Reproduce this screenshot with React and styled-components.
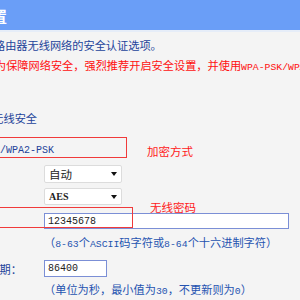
import React from 'react'
import styled, { createGlobalStyle } from 'styled-components'

const GlobalStyle = createGlobalStyle`
  body {
    margin: 0;
    background: #f4f4f4;
    font-family: "Noto Sans CJK SC", sans-serif;
  }
`

const Page = styled.div`
  width: 300px;
  height: 300px;
  overflow: hidden;
  position: relative;
  background: #f4f4f4;
`

const TitleBar = styled.div`
  height: 30px;
  background: #6a9ef7;
  border-bottom: 2px solid #e6edf8;
  display: flex;
  align-items: center;
`

const Title = styled.h1`
  margin: 0 0 0 -83px;
  font-size: 15px;
  font-weight: bold;
  line-height: 1;
  color: #fff;
  white-space: nowrap;
`

const Line = styled.p`
  margin: ${p => p.$top}px 0 0 ${p => p.$shift}px;
  font-size: 11.2px;
  line-height: 16px;
  color: ${p => (p.$warn ? '#ff1010' : '#23439a')};
  white-space: nowrap;
`

const Latin = styled.span`
  font-family: "Liberation Mono", monospace;
  font-size: 9.8px;
`

const Form = styled.div`
  margin-left: -100px;
  display: flex;
  flex-direction: column;
`

const Row = styled.div`
  display: grid;
  grid-template-columns: 144px 1fr;
  align-items: center;
  margin-top: ${p => p.$top}px;
  min-height: 16px;
`

const Label = styled.span`
  text-align: ${p => (p.$left ? 'left' : 'right')};
  padding: 0 22px 0 ${p => (p.$left ? '4px' : '0')};
  font-size: 11.2px;
  line-height: 16px;
  color: #23439a;
  white-space: nowrap;
`

const Radio = styled.span`
  grid-column: 1 / 3;
  padding-left: 58px;
  font-family: "Liberation Mono", monospace;
  font-size: 10px;
  line-height: 16px;
  color: #23439a;
  white-space: nowrap;
`

const Select = styled.div`
  width: 78px;
  height: ${p => p.$h}px;
  box-sizing: border-box;
  background: #fff;
  border: 1px solid #dcdcdc;
  border-radius: 2px;
  display: flex;
  align-items: center;
  justify-content: space-between;
  padding: 0 4px;
  color: #222;
  &::after {
    content: "";
    border-left: 3.5px solid transparent;
    border-right: 3.5px solid transparent;
    border-top: 4px solid #111;
  }
`

const SelectText = styled.span`
  font-family: ${p => (p.$latin ? '"Liberation Serif", serif' : '"Noto Sans CJK SC", sans-serif')};
  font-weight: ${p => (p.$latin ? 'bold' : 'normal')};
  font-size: ${p => (p.$latin ? '10px' : '11.5px')};
`

const TextInput = styled.div`
  width: ${p => p.$w}px;
  height: ${p => p.$h}px;
  box-sizing: border-box;
  background: #fff;
  border: 1px solid #7b8fd6;
  display: flex;
  align-items: center;
  padding-left: 3px;
  font-family: "Liberation Mono", monospace;
  font-size: 10px;
  color: #222;
`

const Hint = styled.span`
  grid-column: 2;
  font-size: 11.2px;
  line-height: 16px;
  color: #2553b0;
  white-space: nowrap;
`

const MarkBox = styled.div`
  position: absolute;
  left: -10px;
  top: ${p => p.$top}px;
  width: ${p => p.$w}px;
  height: 21px;
  border: 1.5px solid #f03a3a;
  box-sizing: border-box;
`

const MarkNote = styled.span`
  position: absolute;
  left: ${p => p.$left}px;
  top: ${p => p.$top}px;
  font-size: 11.5px;
  line-height: 16px;
  color: #ff1a1a;
  white-space: nowrap;
`

export default function App() {
  return (
    <Page>
      <GlobalStyle />
      <TitleBar>
        <Title>无线安全设置</Title>
      </TitleBar>
      <Line $top={5} $shift={-62}>本页面设置路由器无线网络的安全认证选项。</Line>
      <Line $top={4} $shift={-61} $warn>
        安全提示：为保障网络安全，强烈推荐开启安全设置，并使用<Latin>WPA-PSK/WPA2-PSK AES</Latin>加密方法。
      </Line>
      <Line $top={34} $shift={-55}>○ 不开启无线安全</Line>
      <Form>
        <Row $top={17}>
          <Radio>WPA-PSK/WPA2-PSK</Radio>
        </Row>
        <Row $top={6}>
          <Label $left>认证类型：</Label>
          <Select $h={18}><SelectText>自动</SelectText></Select>
        </Row>
        <Row $top={5}>
          <Label $left>加密算法：</Label>
          <Select $h={17}><SelectText $latin>AES</SelectText></Select>
        </Row>
        <Row $top={8}>
          <Label $left>PSK密码：</Label>
          <TextInput $w={245} $h={16}>12345678</TextInput>
        </Row>
        <Row $top={5}>
          <Hint>
            （<Latin>8-63</Latin>个<Latin>ASCII</Latin>码字符或<Latin>8-64</Latin>个十六进制字符）
          </Hint>
        </Row>
        <Row $top={7}>
          <Label>组密钥更新周期：</Label>
          <TextInput $w={63} $h={17}>86400</TextInput>
        </Row>
        <Row $top={4}>
          <Hint>（单位为秒，最小值为<Latin>30</Latin>，不更新则为<Latin>0</Latin>）</Hint>
        </Row>
      </Form>
      <MarkBox $top={137} $w={137} />
      <MarkNote $left={147} $top={143}>加密方式</MarkNote>
      <MarkBox $top={207} $w={143} />
      <MarkNote $left={150} $top={199}>无线密码</MarkNote>
    </Page>
  )
}
